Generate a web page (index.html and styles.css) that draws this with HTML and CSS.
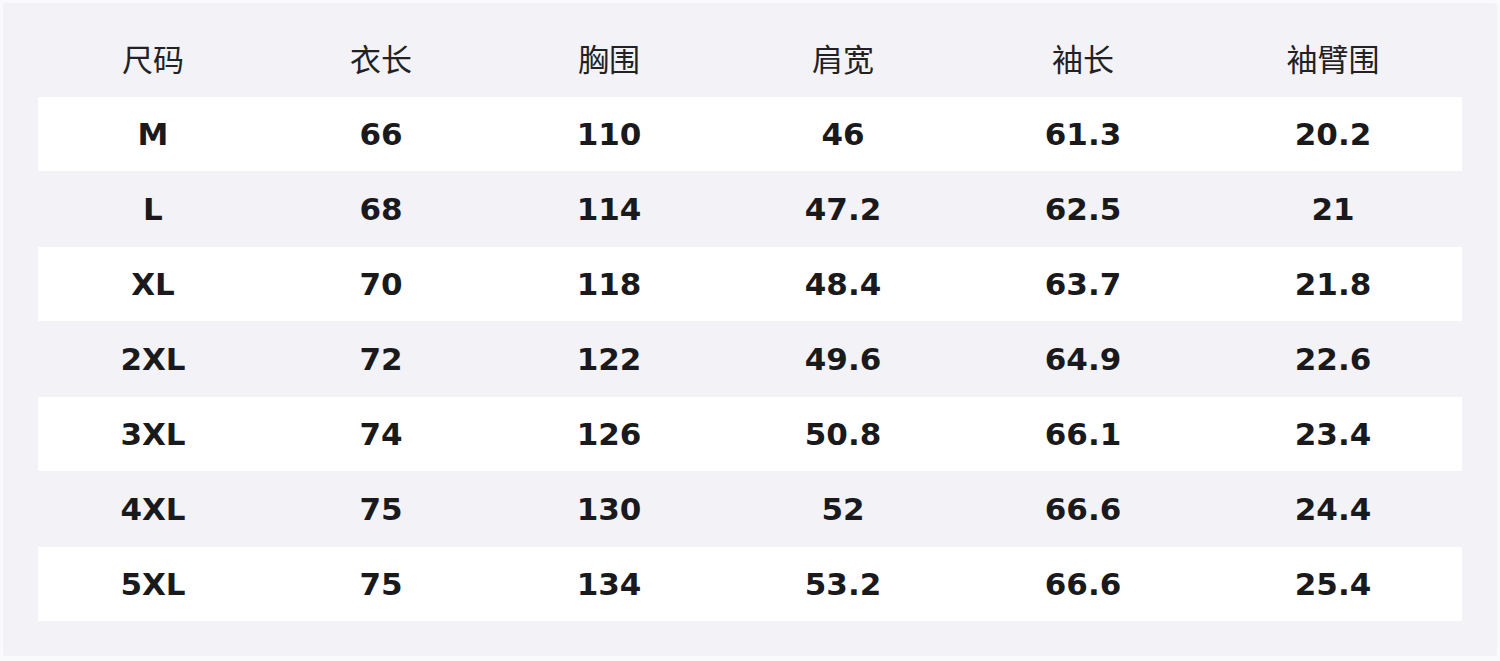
FILE: index.html
```html
<!DOCTYPE html>
<html lang="zh">
<head>
<meta charset="utf-8">
<title>尺码表</title>
<link rel="stylesheet" href="styles.css">
</head>
<body>
<div class="card">
  <div class="table">
    <div class="row head">
      <div>尺码</div><div>衣长</div><div>胸围</div><div>肩宽</div><div>袖长</div><div>袖臂围</div>
    </div>
    <div class="row white">
      <div>M</div><div>66</div><div>110</div><div>46</div><div>61.3</div><div>20.2</div>
    </div>
    <div class="row">
      <div>L</div><div>68</div><div>114</div><div>47.2</div><div>62.5</div><div>21</div>
    </div>
    <div class="row white">
      <div>XL</div><div>70</div><div>118</div><div>48.4</div><div>63.7</div><div>21.8</div>
    </div>
    <div class="row">
      <div>2XL</div><div>72</div><div>122</div><div>49.6</div><div>64.9</div><div>22.6</div>
    </div>
    <div class="row white">
      <div>3XL</div><div>74</div><div>126</div><div>50.8</div><div>66.1</div><div>23.4</div>
    </div>
    <div class="row">
      <div>4XL</div><div>75</div><div>130</div><div>52</div><div>66.6</div><div>24.4</div>
    </div>
    <div class="row white">
      <div>5XL</div><div>75</div><div>134</div><div>53.2</div><div>66.6</div><div>25.4</div>
    </div>
  </div>
</div>
</body>
</html>
```
FILE: styles.css
```css
html, body {
  margin: 0;
  padding: 0;
  background: #fafafc;
}
body {
  padding: 3px 3px 0 3px;
}
.card {
  width: 1494px;
  height: 653px;
  box-sizing: border-box;
  background: #f3f3f7;
  border-radius: 3px;
  padding: 19px 35px 0 35px;
}
.table {
  display: flex;
  flex-direction: column;
  gap: 1px;
}
.row {
  display: grid;
  grid-template-columns: 230px 226px 230px 238px 242px 1fr;
  height: 74px;
  align-items: center;
  font-family: "DejaVu Sans", "Noto Sans CJK SC", sans-serif;
  font-weight: bold;
  font-size: 31px;
  color: #1a1a1c;
}
.row > div {
  text-align: center;
  line-height: 1;
}
.row.white {
  background: #ffffff;
}
.row.head {
  font-family: "Noto Sans CJK SC", sans-serif;
  font-weight: normal;
  font-size: 31px;
  color: #222225;
}
.row.head > div {
  padding-bottom: 4px;
}
```
